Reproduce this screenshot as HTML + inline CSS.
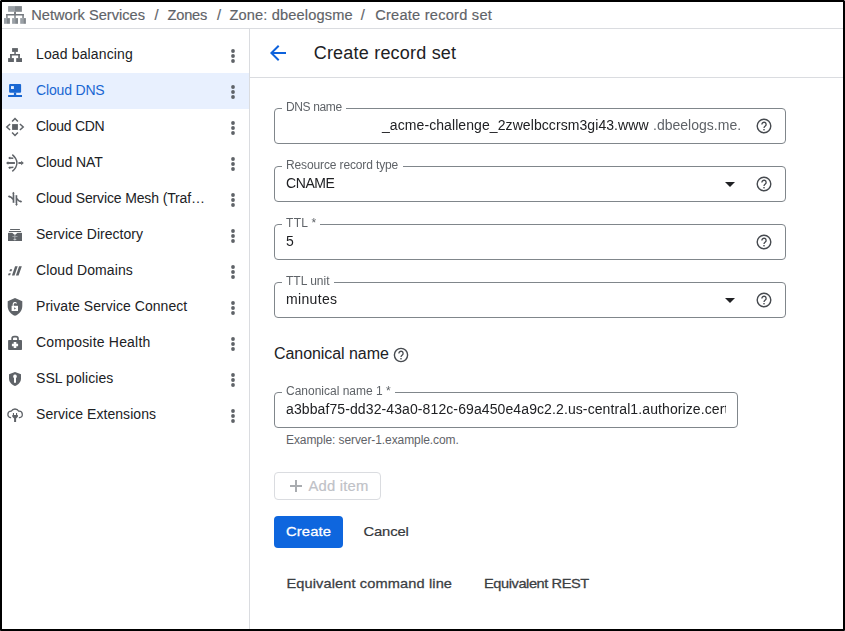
<!DOCTYPE html>
<html lang="en"><head><meta charset="utf-8"><title>Create record set</title>
<style>
html,body{margin:0;padding:0;background:#fff;}
body{width:845px;height:631px;position:relative;overflow:hidden;font-family:"Liberation Sans",sans-serif;}
.t{position:absolute;white-space:pre;line-height:1;}
.abs{position:absolute;}
.frame{position:absolute;left:0;top:0;width:841px;height:627px;border:2px solid #000;z-index:10;pointer-events:none;}
.fld{position:absolute;box-sizing:border-box;border:1px solid #80868b;border-radius:4px;height:36px;}
.lbl{position:absolute;background:#fff;height:3px;top:-1px;}
svg{position:absolute;overflow:visible;}
.m{-webkit-text-stroke:0.3px currentColor;}
.g{will-change:transform;}
</style></head><body>
<div class="abs" style="left:2px;top:28px;width:841px;height:1px;background:#dadce0"></div>
<div class="abs" style="left:249px;top:29px;width:1px;height:600px;background:#dadce0"></div>
<div class="abs" style="left:250px;top:77px;width:593px;height:1px;background:#dadce0"></div>
<div class="abs" style="left:2px;top:73px;width:247px;height:36px;background:#e8f0fe"></div>
<svg style="left:4px;top:6px" width="22" height="18" viewBox="0 0 22 18">
<rect x="4.1" y="0.1" width="6.9" height="5.7" fill="#9aa0a6"/><rect x="11" y="0.1" width="6.9" height="5.7" fill="#80868b"/>
<rect x="10.3" y="5.8" width="1.4" height="2.4" fill="#4a4e52"/>
<rect x="2.2" y="8" width="17.6" height="1.5" fill="#72777d"/>
<rect x="2.2" y="8" width="1.4" height="4.2" fill="#777c82"/><rect x="10.3" y="8" width="1.4" height="4.2" fill="#777c82"/><rect x="18.3" y="8" width="1.5" height="4.2" fill="#777c82"/>
<rect x="0" y="12.1" width="3" height="5.7" fill="#9aa0a6"/><rect x="3" y="12.1" width="2.9" height="5.7" fill="#80868b"/>
<rect x="8.1" y="12.1" width="3" height="5.7" fill="#9aa0a6"/><rect x="11.1" y="12.1" width="2.9" height="5.7" fill="#80868b"/>
<rect x="16.2" y="12.1" width="3" height="5.7" fill="#9aa0a6"/><rect x="19.2" y="12.1" width="2.7" height="5.7" fill="#80868b"/>
</svg>
<span class="t" style="left:31.2px;top:8.04px;font-size:14.6px;letter-spacing:0.017px;color:#5f6368;-webkit-text-stroke:0.18px #5f6368;transform:scaleY(0.959);transform-origin:0 84.65%;">Network Services</span>
<span class="t" style="left:154.4px;top:8.04px;font-size:14.6px;letter-spacing:0px;color:#5f6368;-webkit-text-stroke:0.18px #5f6368;transform:scaleY(0.959);transform-origin:0 84.65%;">/</span>
<span class="t" style="left:167.6px;top:8.04px;font-size:14.6px;letter-spacing:-0.241px;color:#5f6368;-webkit-text-stroke:0.18px #5f6368;transform:scaleY(0.959);transform-origin:0 84.65%;">Zones</span>
<span class="t" style="left:216.9px;top:8.04px;font-size:14.6px;letter-spacing:0px;color:#5f6368;-webkit-text-stroke:0.18px #5f6368;transform:scaleY(0.959);transform-origin:0 84.65%;">/</span>
<span class="t" style="left:229.4px;top:8.04px;font-size:14.6px;letter-spacing:0.154px;color:#5f6368;-webkit-text-stroke:0.18px #5f6368;transform:scaleY(0.959);transform-origin:0 84.65%;">Zone: dbeelogsme</span>
<span class="t" style="left:360.8px;top:8.04px;font-size:14.6px;letter-spacing:0px;color:#5f6368;-webkit-text-stroke:0.18px #5f6368;transform:scaleY(0.959);transform-origin:0 84.65%;">/</span>
<span class="t" style="left:375.2px;top:8.04px;font-size:14.6px;letter-spacing:0.241px;color:#5f6368;-webkit-text-stroke:0.18px #5f6368;transform:scaleY(0.959);transform-origin:0 84.65%;">Create record set</span>
<svg style="left:3px;top:43px" width="24" height="24" viewBox="0 0 24 24"><g fill="#5f6368"><rect x="9.1" y="5.1" width="5.8" height="3.8"/><rect x="11.3" y="8.8" width="1.500" height="2.4"/><rect x="7.1" y="11" width="9.8" height="1.5"/><rect x="7.1" y="11" width="1.7" height="4.2"/><rect x="15.2" y="11" width="1.7" height="4.2"/><rect x="5.1" y="15.1" width="5.8" height="3.9"/><rect x="13.2" y="15.1" width="5.8" height="3.9"/></g></svg>
<span class="t" style="left:36.0px;top:47.15px;font-size:14px;letter-spacing:0.14px;color:#202124;">Load balancing</span>
<svg style="left:223px;top:46px" width="20" height="20" viewBox="0 0 20 20"><g fill="#5f6368"><circle cx="10" cy="5" r="1.900"/><circle cx="10" cy="10" r="1.900"/><circle cx="10" cy="15" r="1.900"/></g></svg>
<svg style="left:3px;top:79px" width="24" height="24" viewBox="0 0 24 24"><g fill="#1967d2"><rect x="6.1" y="5" width="12" height="8.7" rx="1"/><rect x="10.9" y="13.5" width="2.3" height="2.6"/><rect x="5.1" y="16" width="13.9" height="2"/></g><rect x="8" y="7.1" width="2.9" height="2.9" fill="#e8f0fe"/></svg>
<span class="t" style="left:36.0px;top:83.15px;font-size:14px;letter-spacing:-0.166px;color:#1967d2;">Cloud DNS</span>
<svg style="left:223px;top:82px" width="20" height="20" viewBox="0 0 20 20"><g fill="#5f6368"><circle cx="10" cy="5" r="1.900"/><circle cx="10" cy="10" r="1.900"/><circle cx="10" cy="15" r="1.900"/></g></svg>
<svg style="left:3px;top:115px" width="24" height="24" viewBox="0 0 24 24"><rect x="9.1" y="9.1" width="5.8" height="5.8" fill="#5f6368"/><g fill="none" stroke="#5f6368" stroke-width="1.5"><path d="M9.1 6.6 L12 3.5 L14.9 6.6"/><path d="M9.1 17.4 L12 20.4 L14.9 17.4"/><path d="M7.1 9 L3.8 12 L7.1 15"/><path d="M16.9 9 L20.2 12 L16.9 15"/></g></svg>
<span class="t" style="left:36.0px;top:119.15px;font-size:14px;letter-spacing:-0.264px;color:#202124;">Cloud CDN</span>
<svg style="left:223px;top:118px" width="20" height="20" viewBox="0 0 20 20"><g fill="#5f6368"><circle cx="10" cy="5" r="1.900"/><circle cx="10" cy="10" r="1.900"/><circle cx="10" cy="15" r="1.900"/></g></svg>
<svg style="left:3px;top:151px" width="24" height="24" viewBox="0 0 24 24"><g fill="none" stroke="#5f6368" stroke-width="1.4"><path d="M9.3 3.6 Q13.9 7.500 13.9 12 Q13.9 16.500 9.3 20.4"/><path d="M4.600 12 H11.900" stroke-width="1.9"/><path d="M15.400 12 H18.600" stroke-width="1.9"/><path d="M6 7.050 L10.300 7.300"/><path d="M6 16.700 L10.400 16.300"/></g><g fill="#5f6368"><path d="M18.200 9.700 L20.800 12 L18.200 14.300z"/><path d="M5.300 10.300 L3 12 L5.300 13.700z"/><path d="M7.200 5.600 L5.100 7 L7.200 8.400z"/><path d="M7.200 15.300 L5.100 16.700 L7.200 18.100z"/></g></svg>
<span class="t" style="left:36.0px;top:155.15px;font-size:14px;letter-spacing:-0.067px;color:#202124;">Cloud NAT</span>
<svg style="left:223px;top:154px" width="20" height="20" viewBox="0 0 20 20"><g fill="#5f6368"><circle cx="10" cy="5" r="1.900"/><circle cx="10" cy="10" r="1.900"/><circle cx="10" cy="15" r="1.900"/></g></svg>
<svg style="left:3px;top:187px" width="24" height="24" viewBox="0 0 24 24"><rect x="10.900" y="8" width="2.200" height="8" fill="#dadce0"/><g fill="none" stroke="#5f6368" stroke-width="1.5"><path d="M10.400 5.600 V15.800"/><path d="M13.500 8.200 V18"/><path d="M5.600 9.400 Q8.800 9.600 10 12.500"/><path d="M14 11.500 Q15.200 14.400 18.400 14.600"/></g><g fill="#5f6368"><path d="M10.400 4.700 L11.600 6.500 H9.200z"/><path d="M13.500 19 L14.700 17.200 H12.300z"/><path d="M4.800 9.300 L6.500 8.300 V10.500z"/><path d="M19.200 14.700 L17.500 13.600 V15.700z"/></g></svg>
<span class="t" style="left:36.0px;top:191.15px;font-size:14px;letter-spacing:-0.133px;color:#202124;">Cloud Service Mesh (Traf…</span>
<svg style="left:223px;top:190px" width="20" height="20" viewBox="0 0 20 20"><g fill="#5f6368"><circle cx="10" cy="5" r="1.900"/><circle cx="10" cy="10" r="1.900"/><circle cx="10" cy="15" r="1.900"/></g></svg>
<svg style="left:3px;top:223px" width="24" height="24" viewBox="0 0 24 24"><g fill="#5f6368"><rect x="7.100" y="6" width="9.800" height="1"/><rect x="5.900" y="8" width="12.200" height="1.100"/><path d="M5 9.900 H19 V18 H5z"/></g><path d="M8.700 9.200 H15 L12.300 11.800 H11.400z" fill="#fff"/><rect x="11.400" y="11.300" width="0.900" height="6.300" fill="#b4b7bb"/><rect x="9.400" y="13" width="5.100" height="0.800" fill="#a4a8ac"/><rect x="10.500" y="15.900" width="2.800" height="0.900" fill="#cfd1d4"/></svg>
<span class="t" style="left:36.0px;top:227.15px;font-size:14px;letter-spacing:0.025px;color:#202124;">Service Directory</span>
<svg style="left:223px;top:226px" width="20" height="20" viewBox="0 0 20 20"><g fill="#5f6368"><circle cx="10" cy="5" r="1.900"/><circle cx="10" cy="10" r="1.900"/><circle cx="10" cy="15" r="1.900"/></g></svg>
<svg style="left:3px;top:259px" width="24" height="24" viewBox="0 0 24 24"><g fill="#5f6368"><path d="M12.100 7.200 H14.700 L11.500 16.500 H8.900z"/><path d="M16.100 7.200 H18.800 L15.600 16.500 H12.900z"/><path d="M7.100 10.300 H9.200 L8.500 12.300 H6.400z"/><path d="M5.700 14.300 H7.800 L7.100 16.300 H5z"/></g></svg>
<span class="t" style="left:36.0px;top:263.15px;font-size:14px;letter-spacing:0.09px;color:#202124;">Cloud Domains</span>
<svg style="left:223px;top:262px" width="20" height="20" viewBox="0 0 20 20"><g fill="#5f6368"><circle cx="10" cy="5" r="1.900"/><circle cx="10" cy="10" r="1.900"/><circle cx="10" cy="15" r="1.900"/></g></svg>
<svg style="left:3px;top:295px" width="24" height="24" viewBox="0 0 24 24"><path d="M12 3 L19.300 6.200 V11 C19.300 15.600 16.200 19.400 12 20.800 C7.800 19.400 4.700 15.600 4.700 11 V6.200z" fill="#5f6368"/><path d="M8.600 10.800 H15 V16 H8.600z" fill="#fff"/><path d="M10.200 11 V9.300 A1.750 1.750 0 0 1 13.500 8.500" fill="none" stroke="#fff" stroke-width="1.100"/><path d="M11.200 12.200 L13 13.400 L11.200 14.600z" fill="#5f6368"/></svg>
<span class="t" style="left:36.0px;top:299.15px;font-size:14px;letter-spacing:0.046px;color:#202124;">Private Service Connect</span>
<svg style="left:223px;top:298px" width="20" height="20" viewBox="0 0 20 20"><g fill="#5f6368"><circle cx="10" cy="5" r="1.900"/><circle cx="10" cy="10" r="1.900"/><circle cx="10" cy="15" r="1.900"/></g></svg>
<svg style="left:3px;top:331px" width="24" height="24" viewBox="0 0 24 24"><rect x="5.100" y="8.900" width="13.900" height="10.100" rx="0.800" fill="#5f6368"/><path d="M9.150 9 V7.700 A2 2 0 0 1 11.150 5.700 H13 A2 2 0 0 1 15 7.700 V9" fill="none" stroke="#5f6368" stroke-width="1.700"/><path d="M10.700 10.900 H13.300 V12.700 H15.100 V15.300 H13.300 V17.100 H10.700 V15.300 H8.900 V12.700 H10.700z" fill="#fff"/></svg>
<span class="t" style="left:36.0px;top:335.15px;font-size:14px;letter-spacing:0.201px;color:#202124;">Composite Health</span>
<svg style="left:223px;top:334px" width="20" height="20" viewBox="0 0 20 20"><g fill="#5f6368"><circle cx="10" cy="5" r="1.900"/><circle cx="10" cy="10" r="1.900"/><circle cx="10" cy="15" r="1.900"/></g></svg>
<svg style="left:3px;top:367px" width="24" height="24" viewBox="0 0 24 24"><path d="M12 5.100 L18 7.300 V11.500 C18 15 15.500 17.800 12 19 C8.500 17.800 6 15 6 11.500 V7.300z" fill="#5f6368"/><path d="M12 7.600 A1.850 1.850 0 0 1 13 11 V15.800 H11 V11 A1.850 1.850 0 0 1 12 7.600z" fill="#fff"/></svg>
<span class="t" style="left:36.0px;top:371.15px;font-size:14px;letter-spacing:0.07px;color:#202124;">SSL policies</span>
<svg style="left:223px;top:370px" width="20" height="20" viewBox="0 0 20 20"><g fill="#5f6368"><circle cx="10" cy="5" r="1.900"/><circle cx="10" cy="10" r="1.900"/><circle cx="10" cy="15" r="1.900"/></g></svg>
<svg style="left:3px;top:403px" width="24" height="24" viewBox="0 0 24 24"><path d="M7.600 14.600 A3.220 3.220 0 0 1 8.200 8.200 A4.380 4.380 0 0 1 15.800 8.200 A3.200 3.200 0 0 1 16.400 14.600" fill="none" stroke="#5f6368" stroke-width="1.300" stroke-linecap="round"/><g fill="#5f6368"><rect x="9.900" y="10" width="1.100" height="2.400"/><rect x="13" y="10" width="1.100" height="2.400"/><path d="M9.300 12.100 H14.900 V13.800 L13.100 15.600 V19 H11.100 V15.600 L9.300 13.800z"/></g></svg>
<span class="t" style="left:36.0px;top:407.15px;font-size:14px;letter-spacing:0.055px;color:#202124;">Service Extensions</span>
<svg style="left:223px;top:406px" width="20" height="20" viewBox="0 0 20 20"><g fill="#5f6368"><circle cx="10" cy="5" r="1.900"/><circle cx="10" cy="10" r="1.900"/><circle cx="10" cy="15" r="1.900"/></g></svg>
<svg style="left:266px;top:41px" width="24" height="24" viewBox="0 0 24 24"><path d="M20 11H7.830l5.590-5.590L12 4l-8 8 8 8 1.410-1.410L7.830 13H20v-2z" fill="#0d62dc"/></svg>
<span class="t" style="left:313.7px;top:43.96px;font-size:18px;letter-spacing:0.209px;color:#202124;">Create record set</span>
<div class="fld" style="left:274px;top:108px;width:512px"><div class="lbl" style="left:7px;width:64px"></div></div>
<span class="t g" style="left:286.2px;top:101.14px;font-size:12px;letter-spacing:-0.37px;color:#5f6368;">DNS name</span>
<span class="t g" style="left:381.8px;top:118.15px;font-size:14px;letter-spacing:0.08px;color:#202124;">_acme-challenge_2zwelbccrsm3gi43.www</span>
<span class="t g" style="left:652.9px;top:118.15px;font-size:14px;letter-spacing:0.012px;color:#5f6368;">.dbeelogs.me.</span>
<svg style="left:755px;top:117px" width="18" height="18" viewBox="0 0 18 18"><circle cx="9" cy="9" r="6.8" fill="none" stroke="#464a4f" stroke-width="1.400"/><path d="M6.900 7.400 A2.100 2.100 0 1 1 10.300 9 C9.400 9.700 9 10 9 11" fill="none" stroke="#464a4f" stroke-width="1.300"/><rect x="8.300" y="12" width="1.400" height="1.400" fill="#464a4f"/></svg>
<div class="fld" style="left:274px;top:166px;width:512px"><div class="lbl" style="left:7px;width:121px"></div></div>
<span class="t g" style="left:286.2px;top:159.04px;font-size:12px;letter-spacing:-0.128px;color:#5f6368;">Resource record type</span>
<span class="t g" style="left:286.0px;top:175.75px;font-size:14px;letter-spacing:-0.416px;color:#202124;">CNAME</span>
<svg style="left:725.3px;top:181.5px" width="10" height="5" viewBox="0 0 10 5"><path d="M0 0 H10 L5 5z" fill="#202124"/></svg>
<svg style="left:755px;top:175px" width="18" height="18" viewBox="0 0 18 18"><circle cx="9" cy="9" r="6.8" fill="none" stroke="#464a4f" stroke-width="1.400"/><path d="M6.900 7.400 A2.100 2.100 0 1 1 10.300 9 C9.400 9.700 9 10 9 11" fill="none" stroke="#464a4f" stroke-width="1.300"/><rect x="8.300" y="12" width="1.400" height="1.400" fill="#464a4f"/></svg>
<div class="fld" style="left:274px;top:224px;width:512px"><div class="lbl" style="left:7px;width:38px"></div></div>
<span class="t g" style="left:286.2px;top:217.04px;font-size:12px;letter-spacing:0.298px;color:#5f6368;">TTL *</span>
<span class="t g" style="left:286.0px;top:233.85px;font-size:14px;letter-spacing:0px;color:#202124;">5</span>
<svg style="left:755px;top:233px" width="18" height="18" viewBox="0 0 18 18"><circle cx="9" cy="9" r="6.8" fill="none" stroke="#464a4f" stroke-width="1.400"/><path d="M6.900 7.400 A2.100 2.100 0 1 1 10.300 9 C9.400 9.700 9 10 9 11" fill="none" stroke="#464a4f" stroke-width="1.300"/><rect x="8.300" y="12" width="1.400" height="1.400" fill="#464a4f"/></svg>
<div class="fld" style="left:274px;top:282px;width:512px"><div class="lbl" style="left:7px;width:52px"></div></div>
<span class="t g" style="left:286.2px;top:275.04px;font-size:12px;letter-spacing:-0.011px;color:#5f6368;">TTL unit</span>
<span class="t g" style="left:286.0px;top:291.85px;font-size:14px;letter-spacing:0.345px;color:#202124;">minutes</span>
<svg style="left:725.3px;top:297.5px" width="10" height="5" viewBox="0 0 10 5"><path d="M0 0 H10 L5 5z" fill="#202124"/></svg>
<svg style="left:755px;top:291px" width="18" height="18" viewBox="0 0 18 18"><circle cx="9" cy="9" r="6.8" fill="none" stroke="#464a4f" stroke-width="1.400"/><path d="M6.900 7.400 A2.100 2.100 0 1 1 10.300 9 C9.400 9.700 9 10 9 11" fill="none" stroke="#464a4f" stroke-width="1.300"/><rect x="8.300" y="12" width="1.400" height="1.400" fill="#464a4f"/></svg>
<span class="t" style="left:274.0px;top:346.06px;font-size:16px;letter-spacing:-0.063px;color:#202124;">Canonical name</span>
<svg style="left:392px;top:345.5px" width="18" height="18" viewBox="0 0 18 18"><circle cx="9" cy="9" r="6.6" fill="none" stroke="#464a4f" stroke-width="1.400"/><path d="M6.900 7.400 A2.100 2.100 0 1 1 10.300 9 C9.400 9.700 9 10 9 11" fill="none" stroke="#464a4f" stroke-width="1.300"/><rect x="8.300" y="12" width="1.400" height="1.400" fill="#464a4f"/></svg>
<div class="fld" style="left:274px;top:392px;width:464px"><div class="lbl" style="left:7px;width:113px"></div></div>
<span class="t g" style="left:286.2px;top:385.04px;font-size:12px;letter-spacing:-0.002px;color:#5f6368;">Canonical name 1 *</span>
<div class="abs" style="left:286px;top:397.55px;width:440px;height:24px;overflow:hidden"><span class="t g" style="left:0px;top:4px;font-size:14px;letter-spacing:0.102px;color:#202124">a3bbaf75-dd32-43a0-812c-69a450e4a9c2.2.us-central1.authorize.certificatemanager.goog.</span></div>
<span class="t" style="left:286.0px;top:434.44px;font-size:12px;letter-spacing:-0.09px;color:#5f6368;">Example: server-1.example.com.</span>
<div class="abs" style="left:274px;top:472px;width:107px;height:28px;box-sizing:border-box;border:1px solid #dadce0;border-radius:4px"></div>
<svg style="left:290px;top:480px" width="12" height="12" viewBox="0 0 12 12"><path d="M5 0 H7 V5 H12 V7 H7 V12 H5 V7 H0 V5 H5z" fill="#a9acb0"/></svg>
<span class="t" style="left:308.4px;top:478.97px;font-size:14.8px;letter-spacing:0.228px;color:#bfc2c7;-webkit-text-stroke:0.2px #bfc2c7;transform:scaleY(0.935);transform-origin:0 84.65%;">Add item</span>
<div class="abs" style="left:274px;top:516px;width:69px;height:32px;background:#0e66de;border-radius:4px"></div>
<span class="t" style="left:286.0px;top:524.07px;font-size:14.8px;letter-spacing:0.116px;color:#fff;-webkit-text-stroke:0.3px #fff;transform:scaleY(0.919);transform-origin:0 84.65%;">Create</span>
<span class="t" style="left:363.4px;top:524.07px;font-size:14.8px;letter-spacing:-0.133px;color:#35383c;-webkit-text-stroke:0.22px #35383c;transform:scaleY(0.919);transform-origin:0 84.65%;">Cancel</span>
<span class="t" style="left:286.4px;top:576.34px;font-size:14.6px;letter-spacing:0.115px;color:#3c4043;-webkit-text-stroke:0.3px #3c4043;transform:scaleY(0.89);transform-origin:0 84.65%;">Equivalent command line</span>
<span class="t" style="left:484.0px;top:576.34px;font-size:14.6px;letter-spacing:-0.424px;color:#3c4043;-webkit-text-stroke:0.3px #3c4043;transform:scaleY(0.89);transform-origin:0 84.65%;">Equivalent REST</span>
<div class="frame"></div>
<div class="abs" style="left:0;top:0;width:1px;height:1px;background:#858585;z-index:11"></div><div class="abs" style="left:844px;top:0;width:1px;height:1px;background:#858585;z-index:11"></div><div class="abs" style="left:0;top:630px;width:1px;height:1px;background:#3a3a3a;z-index:11"></div><div class="abs" style="left:844px;top:630px;width:1px;height:1px;background:#4a4a4a;z-index:11"></div>
</body></html>
